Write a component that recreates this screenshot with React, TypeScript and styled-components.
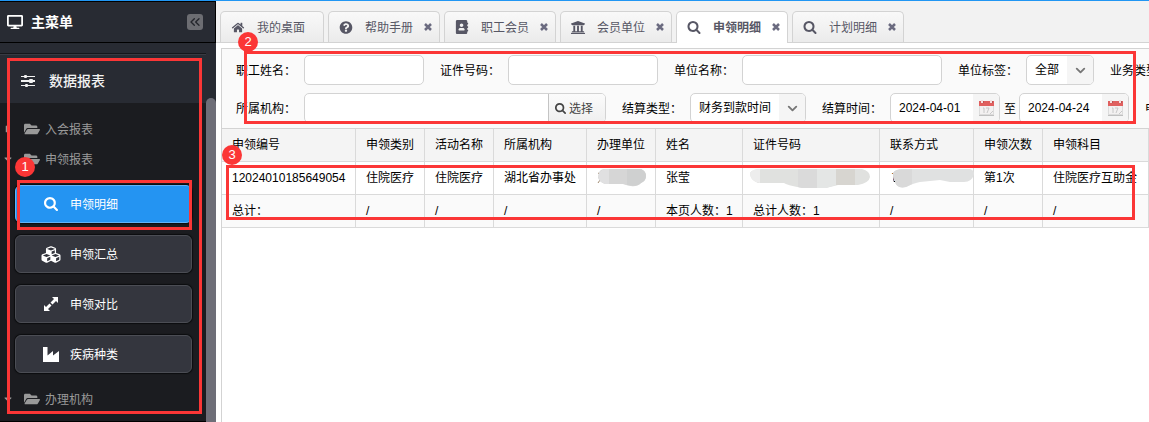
import React from "react";
import styled, { createGlobalStyle, css } from "styled-components";
import {
  FaHome, FaQuestionCircle, FaAddressBook, FaUniversity, FaDesktop,
  FaFolderOpen, FaCubes, FaCaretDown, FaCaretRight,
} from "react-icons/fa";
import { ChevronDown, ChevronsLeft } from "lucide-react";

const Global = createGlobalStyle`
  *, *::before, *::after { box-sizing: border-box; }
  body { margin: 0; background: #fff; overflow: hidden; }
  body, button, input, select {
    font-family: "Liberation Sans", "Noto Sans CJK SC", sans-serif;
    font-size: 12px;
    color: #000;
  }
  button { padding: 0; border: 0; background: none; cursor: pointer; }
`;

const Page = styled.div`
  position: relative;
  display: grid;
  grid-template-columns: 216px minmax(0, 1fr);
  min-height: 100vh;
  border-top: 1px solid #2196f3;
  overflow: hidden;
`;

/* Lifts a caption so that it is optically centred beside its icon. */
const Caption = styled.span`
  padding-bottom: 2px;
`;

/* ---------- sidebar ---------- */
const Sidebar = styled.aside`
  display: flex;
  flex-direction: column;
  background: #282b33;
`;
const SideHeader = styled.header`
  display: flex;
  align-items: center;
  gap: 8px;
  height: 42px;
  padding: 0 12px 0 7px;
  border: solid #000;
  border-width: 1px 1px 1px 0;
  color: #fff;
  h1 { flex: 1; margin: 0; font-size: 14px; line-height: 20px; }
`;
const Collapse = styled.button`
  display: grid;
  place-items: center;
  width: 16px;
  height: 16px;
  border-radius: 3px;
  background: #6c6d72;
  color: #24262c;
`;
const SideBody = styled.div`
  flex: 1;
  display: grid;
  grid-template-columns: minmax(0, 1fr) 10px;
  padding-top: 10px;
`;
const Scroll = styled.div`
  margin-top: 45px;
  border-radius: 5px 5px 0 0;
  background: #6e6e78;
`;
const Menu = styled.nav`
  display: flex;
  flex-direction: column;
  border-top: 1px solid #16171b;
  border-bottom: 1px solid #000;
  background: #1b1c20;
`;
const Group = styled.div`
  display: flex;
  align-items: center;
  gap: 14px;
  height: 49px;
  padding-top: 3px;
  padding-left: 21px;
  border-top: 1px solid #383b43;
  background: #282b33;
  color: #f2f2f2;
  h2 { margin: 0; font-size: 14px; font-weight: 500; line-height: 20px; }
`;
const Tree = styled.div`
  display: flex;
  flex-direction: column;
  padding-top: 11px;
`;
const Branch = styled.button`
  display: flex;
  align-items: center;
  height: 30px;
  padding-left: 4px;
  color: #999;
  text-align: left;
  svg:first-child { width: 8px; height: 12px; margin-right: 12px; }
  svg:nth-child(2) { margin-right: 5px; }
`;
const Leaves = styled.div`
  display: flex;
  flex-direction: column;
  gap: 12px;
  padding: 11px 14px 11px 15px;
`;
const Leaf = styled.button<{ $active?: boolean }>`
  display: flex;
  align-items: center;
  gap: 9px;
  height: 38px;
  padding-left: 25px;
  border: 1px solid #4b4d54;
  border-radius: 6px;
  background: #34363e;
  box-shadow: 0 0 1px 1px #0c0d0f;
  color: #fff;
  svg { width: 20px; }
  ${(p) => p.$active && css`
    background: #2494f2;
    border-color: #62b4f8;
  `}
`;

/* ---------- tabs ---------- */
const Main = styled.main`
  display: flex;
  flex-direction: column;
  min-width: 0;
  overflow: hidden;
`;
const Tabs = styled.div`
  display: flex;
  align-items: flex-end;
  gap: 4px;
  height: 42px;
  padding-left: 4px;
  border-bottom: 1px solid #d3d3d3;
  background: #f2f2f2;
`;
const Tab = styled.div<{ $active?: boolean; $fixed?: boolean }>`
  display: flex;
  align-items: center;
  flex: none;
  gap: 11px;
  height: 31px;
  padding: 0 ${(p) => (p.$fixed ? 18 : 7)}px 0 9px;
  border: 1px solid #d3d3d3;
  border-bottom: 0;
  border-radius: 5px 5px 0 0;
  background: linear-gradient(#f9f9f9, #ebebeb);
  ${(p) => p.$active && css`
    height: 32px;
    margin-bottom: -1px;
    padding-bottom: 1px;
    background: #fff;
  `}
`;
const TabButton = styled.button<{ $active?: boolean }>`
  display: flex;
  align-items: center;
  gap: 11px;
  color: #575765;
  font-weight: ${(p) => (p.$active ? 700 : 400)};
  svg { width: 16px; }
`;
const Close = styled.button`
  display: grid;
  width: 8px;
  color: #6b6b80;
`;

/* ---------- search form ---------- */
const Panel = styled.section`
  flex: 1;
  margin: 5px 0 0 5px;
  border: solid #d3d3d3;
  border-width: 1px 0 0 1px;
`;
const Form = styled.form`
  display: flex;
  flex-direction: column;
  gap: 8px;
  padding: 6px 0 5px 14px;
  background: #fafafa;
`;
const Row = styled.div`
  display: flex;
  gap: 16px;
  height: 30px;
`;
const Field = styled.div`
  display: flex;
  flex: none;
  align-items: center;
  white-space: nowrap;
`;
const Label = styled.label`
  width: 68px;
  padding-bottom: 2px;
`;
const Box = styled.div<{ $w: number }>`
  display: flex;
  width: ${(p) => p.$w}px;
  height: 30px;
  border: 1px solid #d3d3d3;
  border-radius: 5px;
  background: #fff;
  overflow: hidden;
`;
const Input = styled.input`
  flex: 1;
  min-width: 0;
  padding: 0 8px;
  border: 0;
  outline: 0;
  background: transparent;
`;
const Select = styled.select`
  grid-area: 1 / 1 / 2 / 3;
  min-width: 0;
  padding: 0 0 0 8px;
  border: 0;
  outline: 0;
  background: transparent;
  appearance: none;
`;
const SelectBox = styled(Box)`
  display: grid;
  grid-template-columns: minmax(0, 1fr) 26px;
`;
const Arrow = styled.span`
  grid-area: 1 / 2 / 2 / 3;
  display: grid;
  place-items: center;
  background: #f5f5f5;
  color: #777;
  pointer-events: none;
`;
const DateButton = styled.button`
  display: grid;
  place-items: center;
  width: 26px;
  background: #f5f5f5;
`;
const Choose = styled.button`
  display: flex;
  align-items: center;
  gap: 3px;
  width: 57px;
  padding-left: 6px;
  border-left: 1px solid #c4c4c4;
  background: linear-gradient(#fbfbfb, #efefef);
  color: #444;
`;
const To = styled.span`
  width: 19px;
  padding-bottom: 2px;
  padding-left: 4px;
`;

/* ---------- table ---------- */
const Table = styled.table`
  width: 927px;
  table-layout: fixed;
  border-collapse: separate;
  border-spacing: 0;
  border-top: 1px solid #d3d3d3;
`;
const Tr = styled.tr<{ $bg: string }>`
  background: ${(p) => p.$bg};
`;
const cell = css`
  height: 33px;
  padding: 0 0 0 10px;
  border: solid #dadada;
  border-width: 0 1px 1px 0;
  font-weight: 400;
  line-height: 20px;
  text-align: left;
  white-space: nowrap;
`;
const Th = styled.th`${cell}`;
const Td = styled.td`${cell}`;
const Masked = styled.div<{ $pull?: boolean }>`
  display: grid;
  align-items: center;
  margin-left: ${(p) => (p.$pull ? -3 : 0)}px;
  > * { grid-area: 1 / 1; }
`;

/* ---------- callouts ---------- */
const Mark = styled.div<{ $x: number; $y: number; $w: number; $h: number }>`
  position: absolute;
  left: ${(p) => p.$x}px;
  top: ${(p) => p.$y - 1}px;
  width: ${(p) => p.$w}px;
  height: ${(p) => p.$h}px;
  border: 3px solid #fb3636;
  pointer-events: none;
`;
const Num = styled.span<{ $x: number; $y: number }>`
  position: absolute;
  left: ${(p) => p.$x - 10}px;
  top: ${(p) => p.$y - 11}px;
  width: 20px;
  height: 20px;
  border-radius: 50%;
  background: #fb3636;
  color: #fff;
  font-size: 13px;
  line-height: 20px;
  text-align: center;
`;

const SearchIcon = ({ size = 14 }: { size?: number }) => (
  <svg height={size} width={size} viewBox="0 128 1664 1664" fill="currentColor" aria-hidden="true">
    <path d="M1152 832q0-185-131.500-316.500t-316.500-131.500-316.500 131.500-131.500 316.500 131.500 316.500 316.500 131.500 316.500-131.500 131.500-316.500zm512 832q0 52-38 90t-90 38q-54 0-90-38l-343-342q-179 124-399 124-143 0-273.500-55.500t-225-150-150-225-55.500-273.500 55.500-273.500 150-225 225-150 273.500-55.500 273.500 55.500 225 150 150 225 55.500 273.500q0 220-124 399l343 343q37 37 37 90z" />
  </svg>
);
const SlidersIcon = () => (
  <svg width="14" height="12" viewBox="0 0 14 12" fill="currentColor" aria-hidden="true">
    <path d="M0 1h14v1H0zM0 5h14v2H0zM0 10h14v1H0z" />
    <rect x="3" width="3" height="3" rx="1" />
    <rect x="8" y="4" width="4" height="4" rx="1" />
    <rect x="4" y="9" width="3" height="3" rx="1" />
  </svg>
);
const ExpandIcon = () => (
  <svg width="14" height="14" viewBox="0 0 14 14" fill="currentColor" aria-hidden="true">
    <path d="M8 0h6v6l-2-2-3.500 3.500-2-2L10 2zM0 8l2 2 3.500-3.500 2 2L4 12l2 2H0z" />
  </svg>
);
const IndustryIcon = () => (
  <svg width="16" height="15" viewBox="0 0 16 15" fill="currentColor" aria-hidden="true">
    <path d="M0 0h4.500v8.500L10 4v4.500L16 4v11H0z" />
  </svg>
);
const CloseIcon = () => (
  <svg width="8" height="8" viewBox="0 0 8 8" stroke="currentColor" strokeWidth="2.500" aria-hidden="true">
    <path d="M1 1l6 6M7 1L1 7" />
  </svg>
);

const Calendar = () => (
  <svg width="15" height="17" viewBox="0 0 15 17" aria-hidden="true">
    <path d="M0 2h15v14H0z" fill="#dcdcdc" />
    <path d="M1 6h13v8H1z" fill="#f3f1f1" />
    <path d="M0 1h15v5H0z" fill="#e0605f" />
    <path d="M2 0h2v3H2zM11 0h2v3h-2z" fill="#f6dede" />
    <path d="M4 1h1v2H4zM13 1h1v2h-1z" fill="#b85252" />
    <path d="M4 8h1v5M7 8h3l-2 5M11 14l3-3" fill="none" stroke="#c8c8c8" />
    <path d="M0 15h15v1H0z" fill="#c0c0c0" />
  </svg>
);

const tabs = [
  { name: "我的桌面", icon: <FaHome size={11} />, fixed: true },
  { name: "帮助手册", icon: <FaQuestionCircle size={13} /> },
  { name: "职工会员", icon: <FaAddressBook size={14} /> },
  { name: "会员单位", icon: <FaUniversity size={15} /> },
  { name: "申领明细", icon: <SearchIcon size={13} />, active: true },
  { name: "计划明细", icon: <SearchIcon size={13} /> },
];

const leaves = [
  { name: "申领明细", icon: <SearchIcon />, active: true },
  { name: "申领汇总", icon: <FaCubes size={19} /> },
  { name: "申领对比", icon: <ExpandIcon /> },
  { name: "疾病种类", icon: <IndustryIcon /> },
];

const columns: [string, number][] = [
  ["申领编号", 134], ["申领类别", 69], ["活动名称", 69], ["所属机构", 93], ["办理单位", 69],
  ["姓名", 87], ["证件号码", 137], ["联系方式", 94], ["申领次数", 69], ["申领科目", 106],
];

const UnitMask = () => (
  <svg width="50" height="20" viewBox="0 0 50 20" aria-hidden="true">
    <path d="M1 5l2 1M1 9l2 1M1 15l2-3" stroke="#a08a70" fill="none" />
    <path d="M2 5Q3 1 8 1H44Q49 3 49 8Q49 13 44 15Q40 19 34 18Q28 17 26 16H8Q2 14 1 9z" fill="#d6d6d6" />
    <path d="M8 1h4v15H8Q2 14 1 9Q2 2 8 1z" fill="#e0e0e1" />
    <path d="M30 1h14Q49 3 49 8Q49 13 44 15Q40 19 30 17z" fill="#cfd0d0" />
  </svg>
);
const IdMask = () => (
  <svg width="122" height="24" viewBox="0 0 122 24" aria-hidden="true">
    <path d="M0 7Q2 3 12 3H112Q120 5 120 11Q119 17 108 19H88L76 22H52Q36 19 34 17H8Q0 14 0 7z" fill="#e0e1df" />
    <path d="M0 7Q2 3 10 3V17Q0 15 0 7z" fill="#ededed" />
    <path d="M48 3h19v19H52l-4-1z" fill="#dadada" />
    <path d="M67 3h19v16l-10 3h-9z" fill="#e4e6e5" />
    <path d="M86 3h19v16H86z" fill="#d7d5d0" />
  </svg>
);
const PhoneMask = () => (
  <svg width="84" height="24" viewBox="0 0 84 24" aria-hidden="true">
    <path d="M0 8h4Q1 16 8 20H0z" fill="#fff" />
    <path d="M3 7Q5 3 14 3H80Q84 4 84 8Q82 16 74 16H60L50 14L30 16Q24 17 16 21Q6 23 5 15Q3 13 3 7z" fill="#e0e1e1" />
    <path d="M3 7Q5 3 14 3H22V18L16 21Q6 23 5 15Q3 13 3 7z" fill="#d9d9d9" />
  </svg>
);

const Choice = ({ id, width, value }: { id: string; width: number; value: string }) => (
  <SelectBox $w={width}>
    <Select id={id} defaultValue={value}><option>{value}</option></Select>
    <Arrow><ChevronDown size={15} strokeWidth={3} /></Arrow>
  </SelectBox>
);
const DateBox = ({ id, value, label }: { id: string; value: string; label?: string }) => (
  <Box $w={110}>
    <Input id={id} defaultValue={value} aria-label={label} />
    <DateButton type="button" aria-label="选择日期"><Calendar /></DateButton>
  </Box>
);

export default function App() {
  return (
    <Page>
      <Global />
      <Sidebar>
        <SideHeader>
          <FaDesktop size={16} />
          <h1>主菜单</h1>
          <Collapse aria-label="收起菜单"><ChevronsLeft size={16} strokeWidth={2} /></Collapse>
        </SideHeader>
        <SideBody>
          <Menu>
            <Group><SlidersIcon /><h2>数据报表</h2></Group>
            <Tree>
              <Branch><FaCaretRight /><FaFolderOpen size={16} /><Caption>入会报表</Caption></Branch>
              <Branch><FaCaretDown /><FaFolderOpen size={16} /><Caption>申领报表</Caption></Branch>
              <Leaves>
                {leaves.map((l) => (
                  <Leaf key={l.name} $active={l.active}>{l.icon}<Caption>{l.name}</Caption></Leaf>
                ))}
              </Leaves>
              <Branch><FaCaretDown /><FaFolderOpen size={16} /><Caption>办理机构</Caption></Branch>
            </Tree>
          </Menu>
          <Scroll />
        </SideBody>
      </Sidebar>

      <Main>
        <Tabs>
          {tabs.map((t) => (
            <Tab key={t.name} $active={t.active} $fixed={t.fixed}>
              <TabButton $active={t.active}>{t.icon}<Caption>{t.name}</Caption></TabButton>
              {!t.fixed && <Close aria-label={`关闭${t.name}`}><CloseIcon /></Close>}
            </Tab>
          ))}
        </Tabs>
        <Panel>
          <Form>
            <Row>
              <Field><Label htmlFor="name">职工姓名：</Label><Box $w={120}><Input id="name" /></Box></Field>
              <Field><Label htmlFor="idno">证件号码：</Label><Box $w={150}><Input id="idno" /></Box></Field>
              <Field><Label htmlFor="unit">单位名称：</Label><Box $w={200}><Input id="unit" /></Box></Field>
              <Field><Label htmlFor="tag">单位标签：</Label><Choice id="tag" width={68} value="全部" /></Field>
              <Field><Label htmlFor="biz">业务类型：</Label><Choice id="biz" width={68} value="全部" /></Field>
            </Row>
            <Row>
              <Field>
                <Label htmlFor="org">所属机构：</Label>
                <Box $w={302}>
                  <Input id="org" />
                  <Choose type="button"><SearchIcon size={11} /><Caption>选择</Caption></Choose>
                </Box>
              </Field>
              <Field><Label htmlFor="settle">结算类型：</Label><Choice id="settle" width={116} value="财务到款时间" /></Field>
              <Field>
                <Label htmlFor="from">结算时间：</Label>
                <DateBox id="from" value="2024-04-01" />
                <To>至</To>
                <DateBox id="to" value="2024-04-24" label="结束时间" />
              </Field>
              <Field><Label htmlFor="kind">申领类别：</Label><Choice id="kind" width={68} value="全部" /></Field>
            </Row>
          </Form>
          <Table>
            <colgroup>{columns.map(([n, w]) => <col key={n} width={w} />)}</colgroup>
            <thead>
              <Tr $bg="#f4f4f4">{columns.map(([n]) => <Th key={n} scope="col">{n}</Th>)}</Tr>
            </thead>
            <tbody>
              <Tr $bg="#fff">
                <Td>12024010185649054</Td>
                <Td>住院医疗</Td>
                <Td>住院医疗</Td>
                <Td>湖北省办事处</Td>
                <Td><Masked><UnitMask /></Masked></Td>
                <Td>张莹</Td>
                <Td><Masked $pull><IdMask /></Masked></Td>
                <Td><Masked><span>1</span><PhoneMask /></Masked></Td>
                <Td>第1次</Td>
                <Td>住院医疗互助金</Td>
              </Tr>
              <Tr $bg="#fafafa">
                <Td>总计：</Td>
                <Td>/</Td><Td>/</Td><Td>/</Td><Td>/</Td>
                <Td>本页人数：1</Td>
                <Td>总计人数：1</Td>
                <Td>/</Td><Td>/</Td><Td>/</Td>
              </Tr>
            </tbody>
          </Table>
        </Panel>
      </Main>

      <Mark $x={7} $y={58} $w={195} $h={356} />
      <Mark $x={17} $y={180} $w={175} $h={50} />
      <Mark $x={244} $y={51} $w={892} $h={73} />
      <Mark $x={226} $y={165} $w={909} $h={55} />
      <Num $x={25} $y={167}>1</Num>
      <Num $x={248} $y={42}>2</Num>
      <Num $x={232} $y={155}>3</Num>
    </Page>
  );
}
